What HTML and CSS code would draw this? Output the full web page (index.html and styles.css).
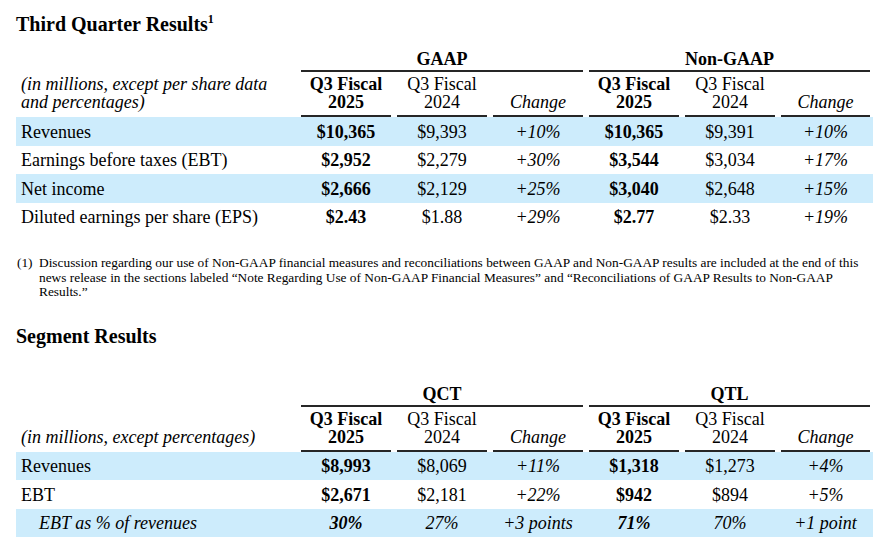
FILE: index.html
```html
<!DOCTYPE html>
<html lang="en">
<head>
<meta charset="utf-8">
<title>Third Quarter Results</title>
<link rel="stylesheet" href="styles.css">
</head>
<body>
<main class="page">
  <h2 class="section-title">Third Quarter Results<sup class="note-ref">1</sup></h2>

  <table class="results results-first">
    <colgroup>
      <col class="col-label"><col class="col-num"><col class="col-num"><col class="col-num"><col class="col-num"><col class="col-num"><col class="col-num-last">
    </colgroup>
    <thead>
      <tr class="group-row">
        <th class="label-head"></th>
        <th colspan="3"><div class="rule-box">GAAP</div></th>
        <th colspan="3"><div class="rule-box">Non-GAAP</div></th>
      </tr>
      <tr class="period-row">
        <th class="label-head"><div class="label-box">(in millions, except per share data<br>and percentages)</div></th>
        <th><div class="rule-box strong">Q3 Fiscal<br>2025</div></th>
        <th><div class="rule-box">Q3 Fiscal<br>2024</div></th>
        <th><div class="rule-box change">Change</div></th>
        <th><div class="rule-box strong">Q3 Fiscal<br>2025</div></th>
        <th><div class="rule-box">Q3 Fiscal<br>2024</div></th>
        <th><div class="rule-box change">Change</div></th>
      </tr>
    </thead>
    <tbody>
      <tr class="band">
        <td class="label">Revenues</td>
        <td class="cur">$10,365</td><td>$9,393</td><td class="chg">+10%</td>
        <td class="cur">$10,365</td><td>$9,391</td><td class="chg">+10%</td>
      </tr>
      <tr>
        <td class="label">Earnings before taxes (EBT)</td>
        <td class="cur">$2,952</td><td>$2,279</td><td class="chg">+30%</td>
        <td class="cur">$3,544</td><td>$3,034</td><td class="chg">+17%</td>
      </tr>
      <tr class="band">
        <td class="label">Net income</td>
        <td class="cur">$2,666</td><td>$2,129</td><td class="chg">+25%</td>
        <td class="cur">$3,040</td><td>$2,648</td><td class="chg">+15%</td>
      </tr>
      <tr>
        <td class="label">Diluted earnings per share (EPS)</td>
        <td class="cur">$2.43</td><td>$1.88</td><td class="chg">+29%</td>
        <td class="cur">$2.77</td><td>$2.33</td><td class="chg">+19%</td>
      </tr>
    </tbody>
  </table>

  <div class="footnote">
    <span class="fn-mark">(1)</span>
    <p class="fn-text">Discussion regarding our use of Non-GAAP financial measures and reconciliations between GAAP and Non-GAAP results are included at the end of this<br>news release in the sections labeled “Note Regarding Use of Non-GAAP Financial Measures” and “Reconciliations of GAAP Results to Non-GAAP<br>Results.”</p>
  </div>

  <h2 class="section-title section-second">Segment Results</h2>

  <table class="results results-second">
    <colgroup>
      <col class="col-label"><col class="col-num"><col class="col-num"><col class="col-num"><col class="col-num"><col class="col-num"><col class="col-num-last">
    </colgroup>
    <thead>
      <tr class="group-row">
        <th class="label-head"></th>
        <th colspan="3"><div class="rule-box">QCT</div></th>
        <th colspan="3"><div class="rule-box">QTL</div></th>
      </tr>
      <tr class="period-row">
        <th class="label-head"><div class="label-box">(in millions, except percentages)</div></th>
        <th><div class="rule-box strong">Q3 Fiscal<br>2025</div></th>
        <th><div class="rule-box">Q3 Fiscal<br>2024</div></th>
        <th><div class="rule-box change">Change</div></th>
        <th><div class="rule-box strong">Q3 Fiscal<br>2025</div></th>
        <th><div class="rule-box">Q3 Fiscal<br>2024</div></th>
        <th><div class="rule-box change">Change</div></th>
      </tr>
    </thead>
    <tbody>
      <tr class="band">
        <td class="label">Revenues</td>
        <td class="cur">$8,993</td><td>$8,069</td><td class="chg">+11%</td>
        <td class="cur">$1,318</td><td>$1,273</td><td class="chg">+4%</td>
      </tr>
      <tr>
        <td class="label">EBT</td>
        <td class="cur">$2,671</td><td>$2,181</td><td class="chg">+22%</td>
        <td class="cur">$942</td><td>$894</td><td class="chg">+5%</td>
      </tr>
      <tr class="band italic-row">
        <td class="label sub">EBT as % of revenues</td>
        <td class="cur">30%</td><td>27%</td><td class="chg">+3 points</td>
        <td class="cur">71%</td><td>70%</td><td class="chg">+1 point</td>
      </tr>
    </tbody>
  </table>
</main>
</body>
</html>
```

FILE: styles.css
```css
html, body {
  margin: 0;
  padding: 0;
  background: #ffffff;
}

body {
  font-family: "Liberation Serif", "Times New Roman", serif;
  color: #000000;
}

.page {
  padding: 13px 0 0 16px;
  width: 857px;
}

.section-title {
  margin: 0;
  font-size: 20px;
  line-height: 23px;
  font-weight: bold;
}

.note-ref {
  font-size: 12px;
  line-height: 0;
  vertical-align: 8px;
}

.results {
  width: 857px;
  border-collapse: collapse;
  table-layout: fixed;
  font-size: 18px;
}

.results-first {
  margin-top: 13px;
}

.results-second {
  margin-top: 36px;
}

.col-label { width: 282px; }
.col-num { width: 96px; }
.col-num-last { width: 95px; }

.results th {
  padding: 0;
  font-weight: bold;
  text-align: center;
  vertical-align: bottom;
}

.rule-box {
  margin: 0 3px;
  border-bottom: 2px solid #262626;
}

.group-row .rule-box {
  line-height: 20px;
  padding-bottom: 1px;
}

.period-row th {
  padding-top: 3px;
}

.period-row .rule-box {
  line-height: 18px;
  padding-bottom: 4px;
  font-weight: normal;
}

.period-row .rule-box.strong {
  font-weight: bold;
}

.period-row .rule-box.change {
  font-style: italic;
}

.label-head {
  text-align: left;
}

.label-box {
  text-align: left;
  font-style: italic;
  font-weight: normal;
  line-height: 18px;
  padding: 0 0 4px 5px;
  border-bottom: 2px solid transparent;
}

.results td {
  height: 28.5px;
  padding: 2px 0 0 0;
  box-sizing: border-box;
  text-align: center;
  vertical-align: middle;
  white-space: nowrap;
}

.results td.label {
  text-align: left;
  padding-left: 5px;
}

.results td.label.sub {
  padding-left: 23px;
}

.results td.cur {
  font-weight: bold;
}

.results td.chg {
  font-style: italic;
}

.band {
  background: #cdecfc;
}

.italic-row td {
  font-style: italic;
}

.footnote {
  display: flex;
  margin-top: 25px;
  font-size: 13.35px;
  line-height: 14.5px;
}

.fn-mark {
  flex: 0 0 23px;
  padding-left: 1px;
  box-sizing: border-box;
}

.fn-text {
  margin: 0;
  white-space: nowrap;
}

.section-second {
  margin-top: 25px;
}
```
